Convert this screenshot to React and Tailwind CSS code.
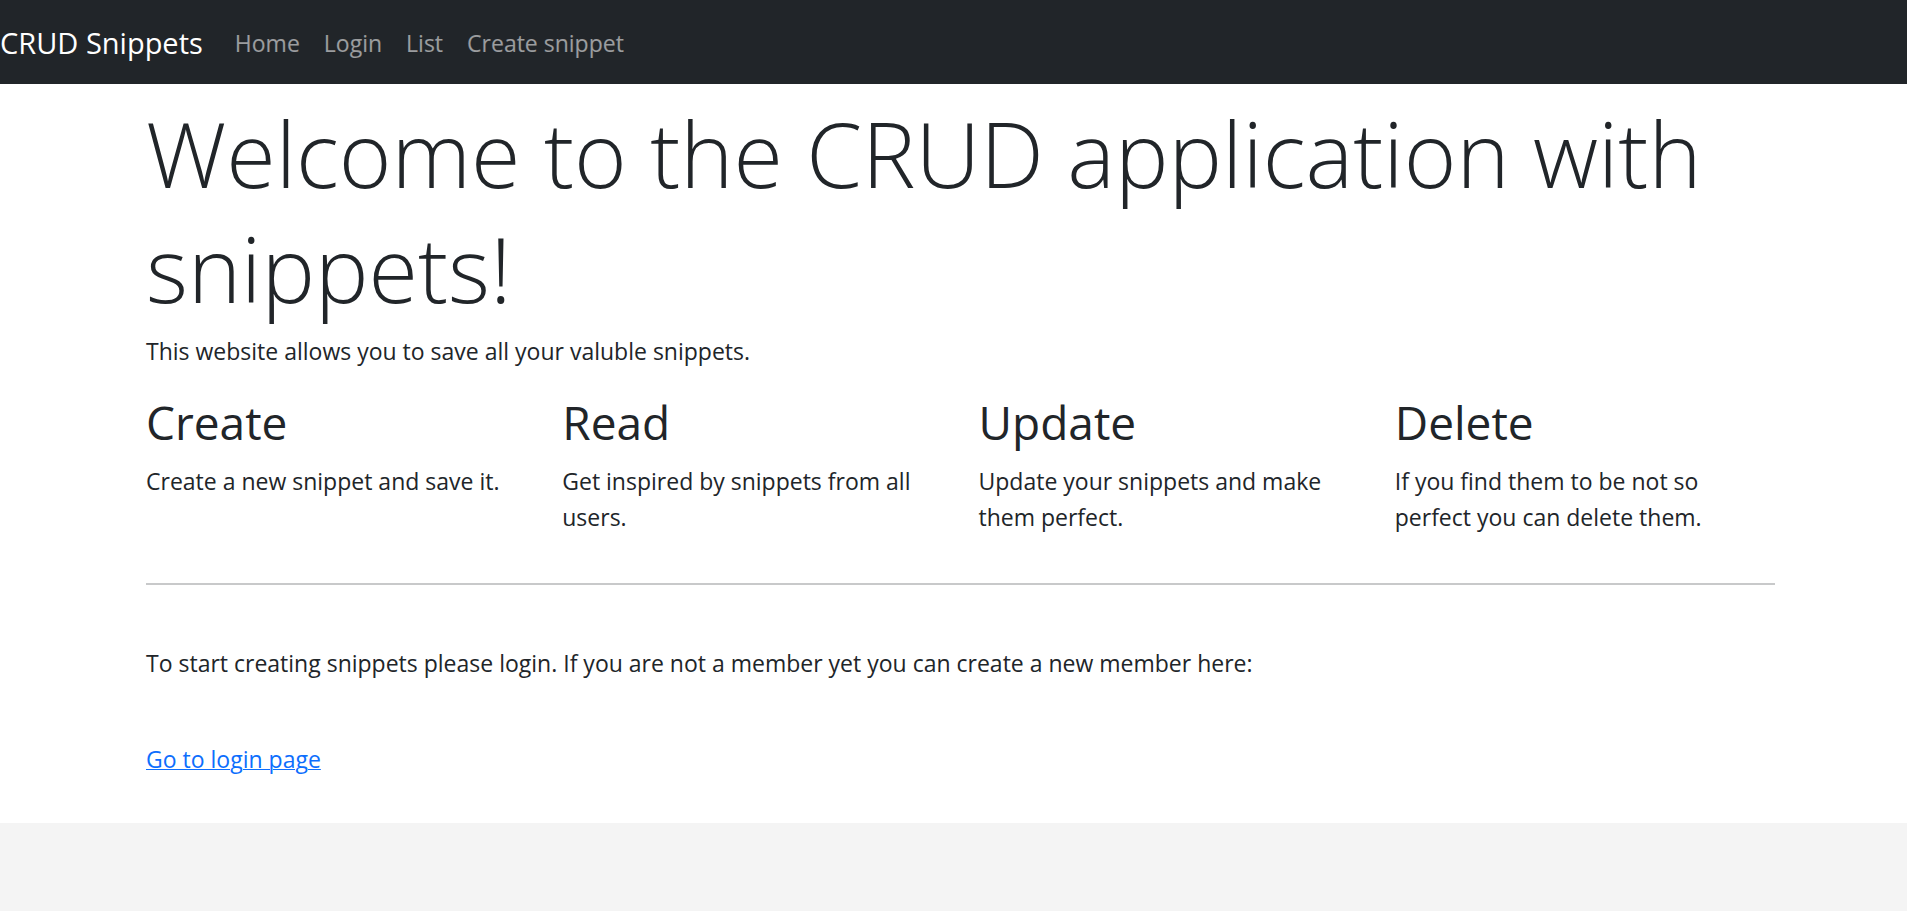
const features = [
  { title: 'Create', text: 'Create a new snippet and save it.' },
  { title: 'Read', text: 'Get inspired by snippets from all users.' },
  { title: 'Update', text: 'Update your snippets and make them perfect.' },
  { title: 'Delete', text: 'If you find them to be not so perfect you can delete them.' },
]

const links = ['Home', 'Login', 'List', 'Create snippet']

export default function App() {
  return (
    <div className="flex min-h-screen flex-col border-r-3 border-white bg-[#f4f4f4] font-['Open_Sans','Noto_Sans',sans-serif] text-[23px] leading-9 text-[#212529]">
      <nav className="flex items-center gap-8 bg-[#212529] pb-[23px] pt-[25px]">
        <a href="#home" className="text-[29px] text-white">CRUD Snippets</a>
        <ul className="flex gap-6">
          {links.map((link) => (
            <li key={link}>
              <a href="#" className="text-white/55">{link}</a>
            </li>
          ))}
        </ul>
      </nav>
      <main className="bg-white pb-[46px] pl-[14px] pt-3">
        <div className="mx-auto max-w-[1629px]">
          <h1 className="text-[90px] font-light leading-[115px]">
            Welcome to the CRUD application with snippets!
          </h1>
          <p className="mt-[7px]">This website allows you to save all your valuble snippets.</p>
          <div className="mt-6 grid grid-cols-4 gap-9">
            {features.map((feature) => (
              <section key={feature.title}>
                <h2 className="text-[46px] leading-[58px]">{feature.title}</h2>
                <p className="mt-3">{feature.text}</p>
              </section>
            ))}
          </div>
          <hr className="mb-15 mt-12 border-t-2 border-[#c8c9ca]" />
          <p>
            To start creating snippets please login. If you are not a member yet you can create a new member here:
          </p>
          <p className="mt-15">
            <a href="#login" className="text-[#0d6efd] underline decoration-1">Go to login page</a>
          </p>
        </div>
      </main>
    </div>
  )
}
